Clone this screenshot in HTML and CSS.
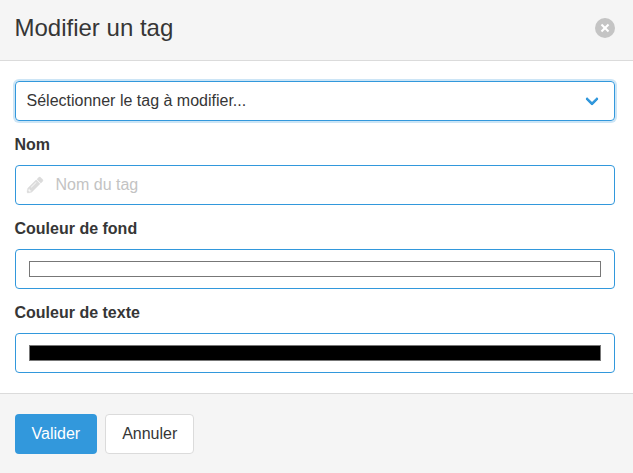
FILE: index.html
```html
<!DOCTYPE html>
<html lang="fr">
<head>
<meta charset="utf-8">
<title>Modifier un tag</title>
<link rel="stylesheet" href="styles.css">
</head>
<body>
<form class="modal-card">
  <header class="modal-head">
    <h1 class="modal-title">Modifier un tag</h1>
    <button class="close" type="button" aria-label="Fermer"></button>
  </header>
  <section class="modal-body">
    <div class="control select focused">
      <span>Sélectionner le tag à modifier...</span>
      <i class="arrow"></i>
    </div>
    <label class="label" for="nom">Nom</label>
    <div class="control">
      <svg class="pencil" viewBox="0 0 512 512"><path d="M497.9 142.1l-46.1 46.1c-4.7 4.7-12.3 4.7-17 0l-111-111c-4.7-4.7-4.7-12.3 0-17l46.1-46.1c18.7-18.7 49.1-18.7 67.9 0l60.1 60.1c18.8 18.7 18.8 49.1 0 67.9zM284.2 99.8L21.6 362.4.4 483.9c-2.9 16.4 11.4 30.6 27.8 27.8l121.5-21.3 262.6-262.6c4.7-4.7 4.7-12.3 0-17l-111-111c-4.8-4.7-12.4-4.7-17.1 0zM124.1 339.9c-5.5-5.5-5.5-14.3 0-19.8l154-154c5.5-5.5 14.3-5.5 19.8 0s5.5 14.3 0 19.8l-154 154c-5.5 5.5-14.3 5.5-19.8 0zM88 424h48v36.3l-64.5 11.3-31.1-31.1L51.7 376H88v48z"/></svg>
      <input class="text-input" id="nom" type="text" placeholder="Nom du tag">
    </div>
    <div class="label">Couleur de fond</div>
    <div class="control color"><div class="swatch"></div></div>
    <div class="label">Couleur de texte</div>
    <div class="control color"><div class="swatch black"></div></div>
  </section>
  <footer class="modal-foot">
    <button class="button primary" type="button">Valider</button>
    <button class="button" type="button">Annuler</button>
  </footer>
</form>
</body>
</html>
```
FILE: styles.css
```css
*, *::before, *::after { box-sizing: border-box; }
html { overflow: hidden; }
body {
  margin: 0;
  background: #f5f5f5;
  color: #363636;
  font: 16px/24px "Liberation Sans", Arial, sans-serif;
}
.modal-head {
  display: flex;
  align-items: center;
  justify-content: space-between;
  height: 61px;
  padding: 0 18px 4px 14.5px;
  border-bottom: 1px solid #dbdbdb;
}
.modal-title { margin: 0; font-size: 24px; font-weight: 400; line-height: 24px; }
.close {
  position: relative;
  width: 20px;
  height: 20px;
  padding: 0;
  border: 0;
  border-radius: 50%;
  background: #c4c4c4;
}
.close::before, .close::after {
  content: "";
  position: absolute;
  top: 9px;
  left: 5px;
  width: 10px;
  height: 2px;
  background: #fff;
  transform: rotate(45deg);
}
.close::after { transform: rotate(-45deg); }
.modal-body { padding: 20px 18px 20px 14.5px; background: #fff; }
.control {
  display: flex;
  align-items: center;
  height: 40px;
  padding: 0 11px;
  border: 1px solid #3298dc;
  border-radius: 4px;
}
.select { justify-content: space-between; }
.focused { box-shadow: 0 0 0 2px rgba(50, 152, 220, .25); }
.arrow {
  width: 10px;
  height: 10px;
  margin-right: 6px;
  border: 3px solid #3298dc;
  border-top: 0;
  border-right: 0;
  border-radius: 2px;
  transform: translateY(-2px) rotate(-45deg);
}
.label { display: block; margin: 12px 0 8px; font-weight: 700; }
.pencil {
  width: 16px;
  height: 16px;
  margin-right: 13px;
  overflow: visible;
  fill: #dbdbdb;
  stroke: #dbdbdb;
  stroke-width: 10;
}
.text-input {
  flex: 1;
  padding: 0;
  border: 0;
  outline: 0;
  background: none;
  color: inherit;
  font: inherit;
}
.text-input::placeholder { color: #c3c3c3; }
.color { padding: 0 13px; }
.swatch { flex: 1; height: 16px; border: 1px solid #777; }
.black { background: #000; }
.modal-foot {
  display: flex;
  gap: 8px;
  padding: 20px 14.5px;
  border-top: 1px solid #dbdbdb;
}
.button {
  height: 40px;
  padding: 0 16px;
  border: 1px solid #dbdbdb;
  border-radius: 4px;
  background: #fff;
  color: #363636;
  font: inherit;
}
.primary { border-color: transparent; background: #3298dc; color: #fff; }
```
